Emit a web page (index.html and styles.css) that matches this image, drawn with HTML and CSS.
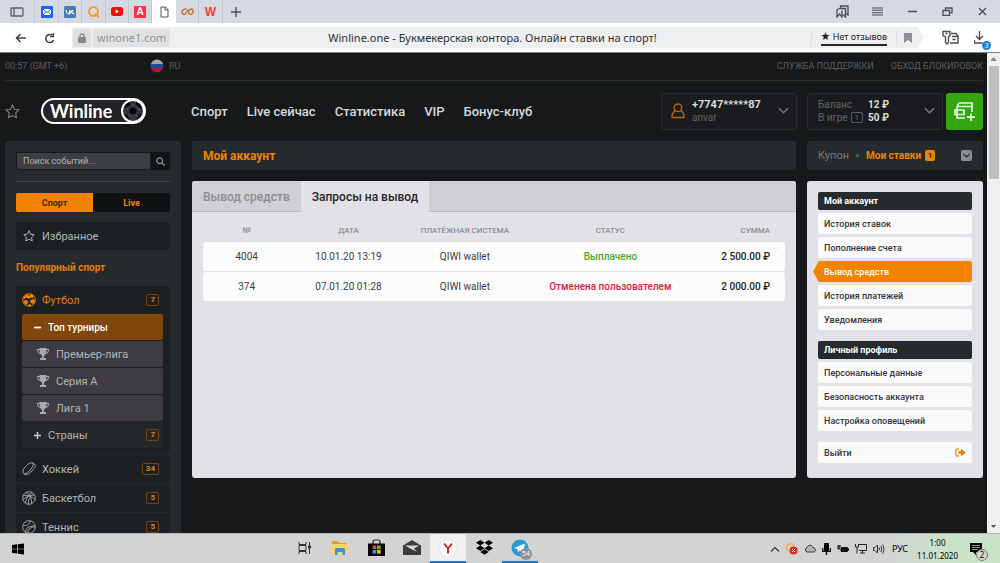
FILE: index.html
```html
<!DOCTYPE html>
<html lang="ru">
<head>
<meta charset="utf-8">
<title>Winline.one - Букмекерская контора. Онлайн ставки на спорт!</title>
<link rel="stylesheet" href="styles.css">
</head>
<body>
<svg class="defs" aria-hidden="true">
  <symbol id="cup" viewBox="0 0 12 12"><path fill="#a9aaac" d="M2.500 0h7v1H12c0 3-1 4.500-3.500 5C8 7 7 7.500 6.900 8v2H9v2H3v-2h2.100V8C5 7.500 4 7 3.500 6 1 5.500 0 4 0 1h2.500zM1 2c.2 1.500.8 2.500 2.100 2.900L2.600 2zm10 0H9.400l-.5 2.900C10.200 4.500 10.800 3.500 11 2z"/></symbol>
  <symbol id="star" viewBox="0 0 16 16"><path fill="none" stroke="currentColor" stroke-width="1.300" stroke-linejoin="round" d="M8 1l2.100 4.600 4.900.6-3.600 3.400.9 5L8 12.200l-4.300 2.400.9-5L1 6.200l4.900-.6z"/></symbol>
  <symbol id="chev" viewBox="0 0 12 8"><path fill="none" stroke="currentColor" stroke-width="1.600" d="M1 1l5 5 5-5"/></symbol>
</svg>

<header class="tabs">
  <button class="tab first" aria-label="Боковая панель"><svg width="14" height="10" viewBox="0 0 14 10" fill="none" stroke="#5b6068" stroke-width="1.300"><rect x="1" y="1" width="12" height="8" rx="1"/><path d="M4 1v8"/></svg></button>
  <button class="tab" aria-label="Почта"><svg width="12" height="12" viewBox="0 0 12 12"><rect width="12" height="12" rx="1" fill="#1a66f0"/><rect x="2" y="3" width="8" height="6" fill="#fff"/><path d="M2 3l4 3.500L10 3M2 9l2.500-3M10 9L7.500 6" fill="none" stroke="#1a66f0"/></svg></button>
  <button class="tab" aria-label="ВКонтакте"><svg width="12" height="12" viewBox="0 0 12 12"><rect width="12" height="12" rx="1.500" fill="#4a7db5"/><path d="M2 4c.5 2.500 1.600 4 3.600 4V4M5.600 6C7 6 8 5 8.200 4M5.600 6C7.500 6 8.500 7 9 8M2.500 4h.5M9 4L7.500 6 10 8" fill="none" stroke="#fff" stroke-width="1.200"/></svg></button>
  <button class="tab" aria-label="QIWI"><svg width="12" height="12" viewBox="0 0 12 12" fill="none" stroke="#f99a1c" stroke-width="1.800"><circle cx="5.500" cy="5.500" r="4.500"/><path d="M6.500 8.500h2l2.500 3"/></svg></button>
  <button class="tab" aria-label="YouTube"><svg width="12" height="9" viewBox="0 0 12 9"><rect width="12" height="9" rx="2.500" fill="#f00f0f"/><path d="M4.700 2.500v4L8 4.500z" fill="#fff"/></svg></button>
  <button class="tab" aria-label="А"><span class="fav-a">A</span></button>
  <button class="tab active" aria-label="Winline"><svg width="9" height="12" viewBox="0 0 9 12" fill="none" stroke="#555" stroke-width="1"><path d="M1 1h4.500L8 3.500V11H1zM5 1v3h3"/></svg></button>
  <button class="tab" aria-label="Вкладка"><svg width="13" height="8" viewBox="0 0 13 8" fill="none" stroke="#b97b35" stroke-width="1.500"><path d="M5.500 1.200C3 .5 1 2.500 1 4.500S4 7.500 5 5M12 1.200C9 .5 7.500 2.500 7.500 4.500S11 7.500 12 4.500 10 1 9.500 1M5 5l2-3.500"/></svg></button>
  <button class="tab last" aria-label="W"><span class="fav-w">W</span></button>
  <button class="tab plain" aria-label="Новая вкладка"><svg width="12" height="12" viewBox="0 0 12 12"><path d="M6 1v10M1 6h10" stroke="#4c5056" stroke-width="1.400"/></svg></button>
  <nav class="win">
    <button aria-label="Закладки"><svg width="13" height="13" viewBox="0 0 13 13" fill="none" stroke="#4b4f56" stroke-width="1.300"><path d="M4.500 3.500V1H12v9l-2-1.500M1 4.500L4 3.500h5.500V12L7 9.500M1 4.500V12l2.500-3L6 12V5.500"/></svg></button>
    <button aria-label="Меню"><svg width="11" height="9" viewBox="0 0 11 9"><path d="M0 1h11M0 3.300h11M0 5.700h11M0 8h11" stroke="#4b4f56" stroke-width="1.100"/></svg></button>
    <button aria-label="Свернуть"><svg width="9" height="9" viewBox="0 0 9 9"><path d="M0 4.500h9" stroke="#4b4f56" stroke-width="1.500"/></svg></button>
    <button aria-label="Окно"><svg width="11" height="9" viewBox="0 0 11 9" fill="none" stroke="#4b4f56" stroke-width="1.300"><path d="M1 3.500h6.500v4.800H1zM3.500 3V1H10v4.800H8"/></svg></button>
    <button aria-label="Закрыть"><svg width="9" height="9" viewBox="0 0 9 9"><path d="M1 1l7 7M8 1L1 8" stroke="#4b4f56" stroke-width="1.400"/></svg></button>
  </nav>
</header>

<div class="toolbar">
  <button class="tool" aria-label="Назад"><svg width="11" height="10" viewBox="0 0 11 10" fill="none" stroke="#3e4247" stroke-width="1.500"><path d="M11 5H1.500M5.500 1L1.500 5l4 4"/></svg></button>
  <button class="tool" aria-label="Обновить"><svg width="11" height="12" viewBox="0 0 11 12" fill="none" stroke="#3e4247" stroke-width="1.600"><path d="M9.500 8A4 4 0 1 1 8 3.200"/><path d="M6 4.500h3.300V1"/></svg></button>
  <div class="address">
    <span class="lock"><svg width="8" height="10" viewBox="0 0 8 10"><rect y="4" width="8" height="6" rx="1" fill="#888"/><path d="M2 4.500V3a2 2 0 0 1 4 0v1.500" fill="none" stroke="#888" stroke-width="1.300"/></svg></span>
    <span class="host">winone1.com</span>
    <span class="doc-title">Winline.one - Букмекерская контора. Онлайн ставки на спорт!</span>
    <span class="reviews"><a href="#"><b>★</b> Нет отзывов</a></span>
    <span class="mark"><svg width="8" height="10" viewBox="0 0 8 10"><path d="M0 0h8v10L4 7l-4 3z" fill="#909296"/></svg></span>
  </div>
  <button class="tool keys" aria-label="Пароли"><svg width="17" height="16" viewBox="0 0 17 16" fill="none" stroke="#4b4f56" stroke-width="1.400"><path d="M1 1.500h7v4L6.500 7v5.500L5 14l-1.500-1.500V7L1 5.500z"/><path d="M3.500 3.500h2M9 3.500h5L16 6v7H8M10 6.500h5.500M10.500 9.500h3"/></svg></button>
  <button class="tool downloads" aria-label="Загрузки"><svg width="12" height="13" viewBox="0 0 12 13" fill="none" stroke="#4b4f56" stroke-width="1.400"><path d="M5.500 0v8M2 5l3.500 3.500L9 5M.5 9v3h8"/></svg><i>3</i></button>
</div>

<div class="viewport">
<main class="page">
  <div class="topline">
    <span class="time">00:57 (GMT +6)</span>
    <span class="lang"><svg width="14" height="14" viewBox="0 0 14 14"><clipPath id="c"><circle cx="7" cy="7" r="6.500"/></clipPath><g clip-path="url(#c)"><path fill="#a5a6a8" d="M0 0h14v5H0z"/><path fill="#1f4b9b" d="M0 5h14v4H0z"/><path fill="#a81b2d" d="M0 9h14v5H0z"/></g></svg>RU</span>
    <a class="support" href="#">СЛУЖБА ПОДДЕРЖКИ</a>
    <a href="#">ОБХОД БЛОКИРОВОК</a>
  </div>

  <div class="head">
    <svg class="headstar" width="15" height="15"><use href="#star"/></svg>
    <a class="logo" href="#">Winline<svg width="24" height="24" viewBox="0 0 24 24"><circle cx="12" cy="12" r="11" fill="#35343c" stroke="#fff" stroke-width="2"/><path fill="#08080a" d="M12 8l4 2.800-1.500 4.400h-5L8 10.800zM5 5l4-2 .500 3L6 8.500 3 9zM15 3l4 2 2 5-2.500-1.500L15 6zM4 15l3 1 1.500 4L6 19zM20 14l-3 2-1 4 3-2z"/><path d="M12 8V5M16 10.800l3-1M14.500 15l2 3M9.500 15l-2 3M8 10.800l-3-1" stroke="#55545d"/></svg></a>
    <nav class="mainnav"><a href="#">Спорт</a><a href="#">Live сейчас</a><a href="#">Статистика</a><a href="#">VIP</a><a href="#">Бонус-клуб</a></nav>
    <button class="userbox"><svg width="14" height="16" viewBox="0 0 14 16" fill="none" stroke="#b86409" stroke-width="1.400"><circle cx="7" cy="4.800" r="3.800"/><path d="M4 8C2 9 1 11 1 14.500h12C13 11 12 9 10 8"/></svg><span class="user"><b>+7747*****87</b><span>anvar</span></span><svg class="chev" width="11" height="8"><use href="#chev"/></svg></button>
    <button class="balance"><span class="sums"><span>Баланс</span><b>12 ₽</b><span class="ingame">В игре <i>1</i></span><b>50 ₽</b></span><svg class="chev" width="11" height="8"><use href="#chev"/></svg></button>
    <button class="deposit" aria-label="Пополнить"><svg width="21" height="19" viewBox="0 0 21 19" fill="none" stroke="#eaf6e8" stroke-width="1.700"><path d="M3.500 5V3l2-2H18v9M3.500 4.500H18M11 16H3V5M11 12.500H8M1 8h9v4.500H1zM17 11.500v7.500M13 15.200h8"/></svg></button>
  </div>

  <div class="columns">
    <aside class="sports">
      <form class="search"><input type="text" placeholder="Поиск событий..." aria-label="Поиск событий"><button type="button" aria-label="Найти"><svg width="9" height="9" viewBox="0 0 9 9" fill="none" stroke="#8d8f91" stroke-width="1.300"><circle cx="3.700" cy="3.700" r="2.900"/><path d="M6 6l2.600 2.600"/></svg></button></form>
      <div class="modes"><button class="on">Спорт</button><button>Live</button></div>
      <a class="fav" href="#"><svg width="12" height="12"><use href="#star"/></svg>Избранное</a>
      <h2>Популярный спорт</h2>
      <div class="group">
        <a class="sport current" href="#"><svg width="14" height="14" viewBox="0 0 14 14"><circle cx="7" cy="7" r="6.300" fill="none" stroke="#f08400"/><path fill="#f08400" d="M5 1l2 2 2-2 2.500 1.200L11 5 8.500 4.500 7 6 4.500 4.500 2 6 1 4.500zM8.500 7l3-1L13 8l-1.500 3-3-1zM5.500 7.500L6 10l-2 2-2.700-3L3 7zM6 12l1.500-1.200L9 12.500 7 13.500z"/></svg>Футбол<em>7</em></a>
        <div class="sub">
          <a class="open" href="#"><svg width="9" height="9" viewBox="0 0 9 9"><path d="M1 4.500h7" stroke="#fff" stroke-width="1.700"/></svg>Топ турниры</a>
          <a class="league" href="#"><svg width="12" height="12"><use href="#cup"/></svg>Премьер-лига</a>
          <a class="league" href="#"><svg width="12" height="12"><use href="#cup"/></svg>Серия А</a>
          <a class="league" href="#"><svg width="12" height="12"><use href="#cup"/></svg>Лига 1</a>
          <a class="countries" href="#"><svg width="9" height="9" viewBox="0 0 9 9"><path d="M1 4.500h7M4.500 1v7" stroke="#c9cacb" stroke-width="1.500"/></svg>Страны<em>7</em></a>
        </div>
      </div>
      <a class="sport" href="#"><svg width="14" height="14" viewBox="0 0 14 14" fill="none" stroke="#a0a2a4"><path d="M1.200 8C3 4 8 0 10.500 1S9 8 5.500 10.500 .5 11 1.200 8zM10.500 1C15 2 13 6 10 9s-7 5-8.300 2.500"/></svg>Хоккей<em>34</em></a>
      <a class="sport" href="#"><svg width="14" height="14" viewBox="0 0 14 14" fill="none" stroke="#a0a2a4"><circle cx="7" cy="7" r="6.300"/><path d="M1 5c4-1.500 9 0 12 4M4 1.500c4 2 6 6 5.500 11.300M1 9c2-3 7-5 11.500-5M3.500 12C4 8 7 3 10 1.500M6.500 13c-.5-3 .5-5 2-7"/></svg>Баскетбол<em>5</em></a>
      <a class="sport" href="#"><svg width="14" height="14" viewBox="0 0 14 14" fill="none" stroke="#a0a2a4"><circle cx="7" cy="7" r="6.300"/><path d="M1 5c3.500 1 6 1 7-4M4 13c-.5-3 0-5 3-6s5-1 6-2M6 13c0-2 0-4 2.500-5S12 7 13 7"/></svg>Теннис<em>5</em></a>
    </aside>

    <section class="account">
      <h1 class="bar">Мой аккаунт</h1>
      <div class="panel">
        <div class="ptabs"><button>Вывод средств</button><button class="on">Запросы на вывод</button></div>
        <table>
          <colgroup><col class="c1"><col class="c2"><col class="c3"><col class="c4"><col></colgroup>
          <thead><tr><th>№</th><th>ДАТА</th><th>ПЛАТЁЖНАЯ СИСТЕМА</th><th>СТАТУС</th><th>СУММА</th></tr></thead>
          <tbody>
            <tr><td>4004</td><td>10.01.20 13:19</td><td>QIWI wallet</td><td class="ok">Выплачено</td><td>2 500.00 ₽</td></tr>
            <tr><td>374</td><td>07.01.20 01:28</td><td>QIWI wallet</td><td class="bad">Отменена пользователем</td><td>2 000.00 ₽</td></tr>
          </tbody>
        </table>
      </div>
    </section>

    <aside class="side">
      <div class="bar coupon"><a href="#">Купон</a><span class="dot"></span><a class="bets" href="#">Мои ставки <i>1</i></a><button aria-label="Свернуть"><svg width="7" height="5" viewBox="0 0 7 5"><path d="M.5 1l3 3 3-3" fill="none" stroke="#2a3032" stroke-width="1.300"/></svg></button></div>
      <div class="panel menu">
        <h3>Мой аккаунт</h3>
        <a href="#">История ставок</a><a href="#">Пополнение счета</a><a class="here" href="#">Вывод средств</a><a href="#">История платежей</a><a href="#">Уведомления</a>
        <h3 class="second">Личный профиль</h3>
        <a href="#">Персональные данные</a><a href="#">Безопасность аккаунта</a><a href="#">Настройка оповещений</a>
        <a class="exit" href="#">Выйти<svg width="11" height="9" viewBox="0 0 11 9"><path d="M4 1H2.500Q.8 1 .8 2.500v4Q.8 8 2.500 8H4" fill="none" stroke="#f5921e" stroke-width="1.400"/><path d="M3.500 3H6V.5l5 4-5 4V6H3.500z" fill="#f08400"/></svg></a>
      </div>
    </aside>
  </div>
</main>
<div class="scroll"><svg width="7" height="13" viewBox="0 0 7 13"><path d="M0 8l3.500-4L7 8z" fill="#8a8a8a"/></svg><div class="thumb"></div><svg class="down" width="7" height="13" viewBox="0 0 7 13"><path d="M1 5l2.500 3L6 5z" fill="#505050"/></svg></div>
</div>

<footer class="taskbar">
  <button class="start" aria-label="Пуск"><svg width="12" height="12" viewBox="0 0 13 12"><path d="M0 1.700l5.500-.8v4.700H0zM6.200.8L13 0v5.600H6.200zM0 6.300h5.500V11L0 10.300zM6.200 6.300H13V12l-6.800-.9z"/></svg></button>
  <div class="apps">
    <button aria-label="Представление задач"><svg width="13" height="12" viewBox="0 0 13 12" fill="none" stroke="#333"><path d="M1 0v2.500h7V0M1 12V9.500h7V12M1 3.500h7v5H1zM11.500 0v12"/><path d="M10.500 4h2v2h-2z" fill="#111"/></svg></button>
    <button aria-label="Проводник"><svg width="16" height="14" viewBox="0 0 16 14"><path fill="#dba22c" d="M0 0h6l1.500 2H15v3H0z"/><path fill="#ffd465" d="M0 3h16v10H0z"/><path fill="#3c93d4" d="M3 14V8.500Q3 7 4.500 7h7Q13 7 13 8.500V14h-2.500v-3h-5v3z"/></svg></button>
    <button aria-label="Магазин"><svg width="17" height="17" viewBox="0 0 17 17"><path d="M5 5V3q0-2 2-2h3q2 0 2 2v2" fill="none" stroke="#222" stroke-width="1.200"/><path d="M0 4.500h17V17H0z"/><path fill="#e74a1f" d="M4.500 6.500h3.700v3.700H4.500z"/><path fill="#7fb80b" d="M9 6.500h3.700v3.700H9z"/><path fill="#179fe0" d="M4.500 11h3.700v3.700H4.500z"/><path fill="#fdb80d" d="M9 11h3.700v3.700H9z"/></svg></button>
    <button aria-label="Почта"><svg width="18" height="15" viewBox="0 0 18 15"><path fill="#3c3c3e" d="M0 5.500L9 0l9 5.500V15H0z"/><path fill="#d4d4d4" d="M2 5.500h14l-5 3.300 3 3L8 9z"/></svg></button>
    <button class="run" aria-label="Яндекс.Браузер"><svg width="18" height="18" viewBox="0 0 18 18"><circle cx="9" cy="9" r="8.500" fill="#fff" stroke="#ddd" stroke-width=".6"/><path d="M5 4.500L9 9.500l4-5M9 9v5.500" fill="none" stroke="#e0201c" stroke-width="2"/></svg></button>
    <button aria-label="Dropbox"><svg width="17" height="15" viewBox="0 0 17 15"><path d="M4.300 0l4.200 2.700-4.200 2.700L0 2.700zM12.700 0L17 2.700l-4.300 2.700-4.200-2.700zM4.300 5.500l4.200 2.700-4.200 2.700L0 8.200zM12.700 5.500L17 8.200l-4.300 2.700-4.200-2.700zM8.500 9.300l4.200 2.700-4.200 2.800L4.300 12z"/></svg></button>
    <button class="line" aria-label="Telegram"><svg width="18" height="18" viewBox="0 0 18 18"><circle cx="9" cy="9" r="8.500" fill="#2a9bd6"/><path d="M3 9l11-4.500L12 14 8.500 11.500 7 13.500 6.500 10z" fill="#fff"/></svg><i>54</i></button>
  </div>
  <div class="tray">
    <svg width="10" height="6" viewBox="0 0 10 6"><path d="M1 5.500l4-4 4 4" fill="none" stroke="#333" stroke-width="1.200"/></svg>
    <svg width="12" height="12" viewBox="0 0 12 12"><path d="M2 8A4 4 0 0 1 8 2" fill="none" stroke="#f8b64a" stroke-width="2"/><circle cx="7.500" cy="7.500" r="4" fill="#dc2f23"/><path d="M6 6l3 3M9 6L6 9" stroke="#fff"/></svg>
    <svg width="12" height="9" viewBox="0 0 12 9"><path d="M3 8a2.400 2.400 0 0 1 0-4.500C4 .5 8 .5 9 3.500 12 4 12 8 9.500 8H3z" fill="#b5b5b5" stroke="#333"/></svg>
    <svg width="9" height="12" viewBox="0 0 9 12"><rect x="2" width="5" height="8" rx="1"/><path d="M.7 5v3.300h7.600V5M4.500 8v4" fill="none" stroke="#111" stroke-width="1.300"/></svg>
    <svg width="12" height="8" viewBox="0 0 12 8"><path d="M4 2.500h6.500v4H4z" fill="#111" stroke="#111"/><path d="M0 1h4M0 3h3M2 0v5" stroke="#111"/><path d="M11 3.500h1v2h-1z"/></svg>
    <svg width="12" height="11" viewBox="0 0 12 11" fill="none" stroke="#222"><path d="M3 1.500h8.500v6H4M7.500 7.500V10M5 10h5M.5 1v3h3V1M2 4v6.500"/></svg>
    <svg width="12" height="10" viewBox="0 0 12 10" fill="none" stroke="#333"><path d="M.5 3.500H2L4.500 1v8L2 6.500H.5zM6 3.500q1 1.500 0 3M7.800 2q2 3 0 6M9.600.5q3 4.500 0 9"/></svg>
    <span class="rus">РУС</span>
    <time>1:00<br>11.01.2020</time>
    <button class="notes" aria-label="Уведомления"><svg width="13" height="12" viewBox="0 0 13 12"><path d="M0 0h12v9H6v3L3 9H0z"/><path d="M2 2.500h8M2 4.500h8M2 6.500h6" stroke="#bbb" stroke-width=".8"/></svg><i>2</i></button>
  </div>
</footer>
</body>
</html>
```
FILE: styles.css
```css
* { box-sizing: border-box; }
body { margin: 0; height: 100vh; display: flex; flex-direction: column; overflow: hidden; font-family: Roboto, sans-serif; font-size: 11px; background: #16181a; }
button { border: 0; padding: 0; margin: 0; background: none; font: inherit; color: inherit; display: flex; align-items: center; justify-content: center; }
a { color: inherit; text-decoration: none; }
h1, h2, h3 { margin: 0; font-size: 11px; }
i, em { font-style: normal; }
svg { flex: none; }
.defs { position: absolute; width: 0; height: 0; }

/* browser */
.tabs { display: flex; height: 23px; flex: none; background: #d5d9e2; align-items: stretch; }
.tab { width: 23px; border-right: 1px solid #c2c6cf; }
.tab:nth-child(2), .tab:nth-child(4), .tab.last { width: 24px; }
.tab.first { width: 35px; }
.tab.active { width: 24px; background: #fff; border: 0; }
.tab.plain { border: 0; width: 25px; }
.fav-a { background: #fb3340; color: #fff; width: 12px; height: 12px; font: bold 10px/12px "Liberation Sans", sans-serif; }
.fav-w { color: #f5403f; font: bold 12px/14px "Liberation Sans", sans-serif; }
.win { display: flex; margin-left: auto; }
.win button { width: 35px; }
.toolbar { display: flex; height: 30px; flex: none; background: #fff; align-items: center; border-bottom: 1px solid #808285; padding: 0 6px; font-family: "Noto Sans", sans-serif; }
.tool { width: 29px; height: 24px; }
.address { flex: 1; display: flex; align-items: center; height: 22px; margin-left: 8px; padding: 0 5px 0 0; background: #eeeff1; clip-path: polygon(0 0, calc(100% - 7px) 0, 100% 50%, calc(100% - 7px) 100%, 0 100%); }
.lock { width: 18px; height: 18px; margin-left: 1px; background: #dedfe1; border-radius: 2px; display: flex; align-items: center; justify-content: center; }
.host { margin-left: 2px; height: 18px; padding: 0 4px; background: #e0e1e3; border-radius: 2px; color: #909296; font-size: 11px; line-height: 18px; }
.doc-title { flex: 1; text-align: center; color: #2e3033; font-size: 11px; white-space: nowrap; padding-left: 4px; }
.reviews { border-left: 1px solid #dcdde0; border-right: 1px solid #dcdde0; padding: 0 9px; }
.reviews a { display: block; border-bottom: 2px solid #26282a; font-size: 9px; line-height: 14px; color: #222; white-space: nowrap; }
.reviews b { font: 11px/12px "DejaVu Sans", sans-serif; }
.mark { width: 22px; display: flex; justify-content: center; }
.keys { margin-left: 12px; }
.downloads { position: relative; }
.downloads i { position: absolute; right: 3px; bottom: 0; width: 9px; height: 9px; border-radius: 50%; background: #1780e0; color: #fff; font-size: 7px; line-height: 9px; }

.viewport { flex: 1; min-height: 0; display: flex; }
.page { flex: 1; min-width: 0; padding: 0 4px 0 5px; overflow: hidden; }
.scroll { width: 13px; background: #f0f0f0; display: flex; flex-direction: column; align-items: center; }
.thumb { width: 10px; height: 113px; background: #bfbfbf; }
.down { margin-top: auto; }

/* site header */
.topline { display: flex; align-items: center; height: 28px; padding-bottom: 2px; border-bottom: 1px solid #252d2e; color: #5c5e60; font-size: 9px; }
.time { width: 145px; }
.lang { display: flex; align-items: center; gap: 5px; }
.support { margin-left: auto; margin-right: 17px; }
.head { display: flex; align-items: center; height: 60px; }
.headstar { color: #77797b; }
.logo { display: flex; align-items: center; justify-content: space-between; width: 105px; height: 26px; margin-left: 21px; padding: 0 0 0 7px; border: 2px solid #fff; border-radius: 13px; background: #232329; color: #fff; font: bold 18px/22px Lato, sans-serif; }
.logo svg { margin-right: -1px; }
.mainnav { display: flex; gap: 19px; margin-left: 45px; color: #d8d9da; font-size: 13px; font-weight: 500; white-space: nowrap; }
.userbox, .balance { height: 37px; border: 1px solid #2a2c2f; border-radius: 3px; background: #1a1b1e; text-align: left; color: #626467; }
.userbox { width: 136px; margin-left: auto; padding: 0 7px 0 9px; }
.user { flex: 1; margin-left: 7px; line-height: 13px; font-size: 10px; }
.user b, .user span { display: block; }
.user b { color: #dcdcdd; font-size: 11px; }
.chev { color: #77797b; }
.balance { width: 136px; margin-left: 10px; padding: 0 7px 0 10px; }
.sums { flex: 1; display: grid; grid-template-columns: 50px 1fr; line-height: 13px; font-size: 10px; }
.sums b { color: #dcdcdd; }
.ingame { display: flex; align-items: center; gap: 3px; }
.sums i { border: 1px solid #5c5e61; border-radius: 2px; padding: 0 3px; font-size: 8px; line-height: 9px; }
.deposit { width: 37px; height: 37px; margin-left: 3px; border-radius: 3px; background: #32a50f; }

.columns { display: flex; gap: 11px; align-items: flex-start; }
.bar { height: 29px; border-radius: 3px; background: #252b2d; display: flex; align-items: center; padding: 0 11px; margin-bottom: 11px; }

/* sports list */
.sports { width: 176px; padding: 11px 11px 30px; border-radius: 3px; background: #252b2d; color: #b2b4b6; }
.search { display: flex; height: 18px; }
.search input { flex: 1; min-width: 0; border: 1px solid #16181a; border-radius: 2px 0 0 2px; background: #3f3d43; color: #b2b4b6; padding: 0 6px; font: 9px Roboto, sans-serif; }
.search input::placeholder { color: #b0b0b4; }
.search button { width: 19px; background: #121314; border-radius: 0 2px 2px 0; }
.modes { display: flex; height: 31px; margin-top: 11px; padding-top: 11px; border-top: 1px solid #3d4345; }
.modes button { flex: 1; background: #101112; color: #f08400; font-size: 9px; font-weight: 700; border-radius: 0 2px 2px 0; }
.modes .on { background: #f08400; color: #40280a; border-radius: 2px 0 0 2px; }
.fav, .sport { display: flex; align-items: center; height: 28px; padding: 0 11px 0 6px; border-radius: 3px; background: #1c2022; font-size: 11px; }
.fav { margin-top: 10px; gap: 7px; padding-left: 7px; }
.sports h2 { color: #e47d05; line-height: 13px; margin: 11px 0 12px; font-size: 10px; }
.sport { gap: 6px; margin-top: 1px; }
.group { background: #1c2022; border-radius: 3px; padding-bottom: 6px; }
.group .sport { margin: 0; }
.sport.current { color: #e47d05; }
.sports em { margin-left: auto; border: 1px solid #754511; border-radius: 2px; padding: 0 3px; color: #e47d05; font-size: 8px; font-weight: 700; line-height: 10px; }
.sub { display: flex; flex-direction: column; gap: 1px; padding: 0 7px 0 6px; }
.sub a { display: flex; align-items: center; height: 26px; border-radius: 2px; padding: 0 4px 0 11px; gap: 6px; }
.sub .open { background: #80470c; color: #fff; font-size: 10px; font-weight: 500; }
.sub .league { background: #3e3c42; padding-left: 15px; gap: 7px; }
.sub .countries { background: #23292a; }

/* account */
.account { flex: 1; min-width: 0; }
.account h1 { color: #f08400; font-size: 12px; }
.panel { min-height: 297px; border-radius: 3px; background: #e2e1e7; overflow: hidden; }
.ptabs { display: flex; height: 31px; background: #d0cfd4; box-shadow: inset 0 -1px #bbbabf; }
.ptabs button { padding: 0 11px; color: #8c8c92; font-size: 12px; font-weight: 500; }
.ptabs .on { background: #e2e1e7; color: #26272b; }
table { width: calc(100% - 22px); margin: 0 11px; border-collapse: separate; border-spacing: 0; table-layout: fixed; color: #3e4044; text-align: center; }
.c1 { width: 15%; }
.c2 { width: 20%; }
.c3 { width: 20%; }
.c4 { width: 30%; }
th { height: 30px; padding: 6px 0 0; color: #78787e; font-size: 8px; font-weight: 400; white-space: nowrap; }
td { height: 30px; padding: 0; background: #fbfbfb; font-size: 10px; border-bottom: 1px solid #e2e1e7; white-space: nowrap; }
td:first-child { border-radius: 3px 0 0 3px; }
td:last-child { border-radius: 0 3px 3px 0; }
th:last-child, td:last-child { text-align: right; padding-right: 15px; }
td:last-child { font-weight: 500; color: #222; }
.ok { color: #4ba728; font-weight: 500; }
.bad { color: #df2146; font-weight: 500; }

/* right column */
.side { width: 176px; }
.coupon { color: #77797c; font-size: 11px; }
.dot { width: 3px; height: 3px; border-radius: 50%; background: #5c6062; margin: 0 7px; }
.bets { color: #f08400; font-weight: 700; font-size: 10px; display: flex; align-items: center; gap: 4px; white-space: nowrap; }
.bets i { width: 10px; height: 11px; border-radius: 2px; background: #f08400; color: #252b2d; font-size: 8px; line-height: 11px; text-align: center; }
.coupon button { width: 11px; height: 11px; margin-left: auto; border-radius: 2px; background: #8b8e91; }
.menu { display: flex; flex-direction: column; gap: 3px; padding: 11px 11px 14px; font-size: 9px; color: #33363a; font-weight: 500; }
.menu h3 { height: 18px; padding: 0 6px; border-radius: 2px; background: #252b2d; color: #fff; font-size: 9px; line-height: 18px; }
.menu a { display: flex; justify-content: space-between; align-items: center; height: 21px; padding: 0 6px; border-radius: 2px; background: #fafafa; }
.menu .here { background: #f08400; color: #fff; margin-left: -5px; padding-left: 11px; clip-path: polygon(0 50%, 6px 0, 100% 0, 100% 100%, 6px 100%); }
.menu .second { margin-top: 8px; }
.menu .exit { margin-top: 8px; }

/* taskbar */
.taskbar { flex: none; height: 30px; display: flex; background: linear-gradient(90deg, #d3d3d3 88%, #c9e3c9 95%); border-top: 1px solid #b5b5b5; font-family: "Noto Sans", sans-serif; }
.start { width: 36px; }
.apps { display: flex; margin: 0 auto 0 25%; }
.apps button { width: 36px; position: relative; border-bottom: 2px solid transparent; }
.apps .run { background: #f0f0f0; border-color: #1879c8; }
.apps .line { border-color: #1879c8; }
.apps i { position: absolute; right: 6px; bottom: 1px; width: 12px; height: 12px; border-radius: 50%; background: #8d9195; color: #fff; font-size: 7px; line-height: 12px; }
.tray { display: flex; align-items: center; gap: 6px; padding-right: 12px; }
.rus { margin-left: 1px; font-size: 9px; }
.tray time { font-size: 8px; line-height: 13px; text-align: center; margin: 0 6px 0 3px; }
.notes { position: relative; width: 18px; height: 24px; justify-content: flex-start; }
.notes i { position: absolute; right: 0; bottom: 0; width: 12px; height: 12px; border: 1px solid #777; border-radius: 50%; background: #d3d8d3; font-size: 8px; line-height: 10px; }
```
